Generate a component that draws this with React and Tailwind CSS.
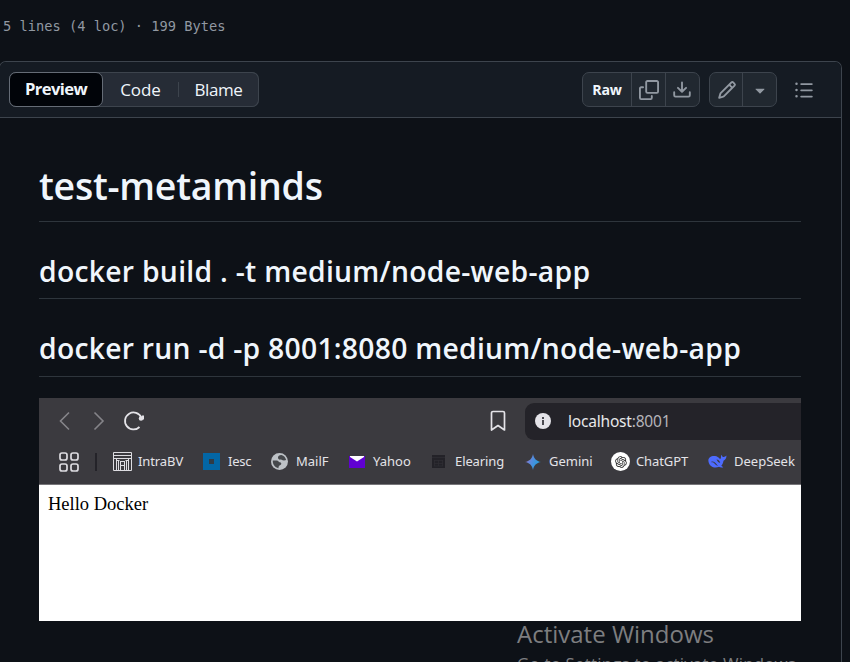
import { RiOpenaiFill } from "react-icons/ri";

const ui = "font-['Open_Sans','Noto_Sans',sans-serif]";
const browserUi = "font-['Noto_Sans','Open_Sans',sans-serif]";

function Octicon({ paths }) {
  return (
    <svg viewBox="0 0 16 16" className="size-5 shrink-0 fill-[#9198a1]">
      {paths.map((d) => (
        <path key={d} d={d} />
      ))}
    </svg>
  );
}

const copy = [
  "M0 6.75C0 5.784.784 5 1.75 5h1.5a.75.75 0 0 1 0 1.5h-1.5a.25.25 0 0 0-.25.25v7.5c0 .138.112.25.25.25h7.5a.25.25 0 0 0 .25-.25v-1.5a.75.75 0 0 1 1.5 0v1.5A1.75 1.75 0 0 1 9.25 16h-7.5A1.75 1.75 0 0 1 0 14.25Z",
  "M5 1.75C5 .784 5.784 0 6.75 0h7.5C15.216 0 16 .784 16 1.75v7.5A1.75 1.75 0 0 1 14.25 11h-7.5A1.75 1.75 0 0 1 5 9.25Zm1.75-.25a.25.25 0 0 0-.25.25v7.5c0 .138.112.25.25.25h7.5a.25.25 0 0 0 .25-.25v-7.5a.25.25 0 0 0-.25-.25Z",
];
const download = [
  "M2.75 14A1.75 1.75 0 0 1 1 12.25v-2.5a.75.75 0 0 1 1.5 0v2.5c0 .138.112.25.25.25h10.5a.25.25 0 0 0 .25-.25v-2.5a.75.75 0 0 1 1.5 0v2.5A1.75 1.75 0 0 1 13.25 14Z",
  "M7.25 7.689V2a.75.75 0 0 1 1.5 0v5.689l1.97-1.969a.749.749 0 1 1 1.06 1.06l-3.25 3.25a.749.749 0 0 1-1.06 0L4.22 6.78a.749.749 0 1 1 1.06-1.06l1.97 1.969Z",
];
const pencil = [
  "M11.013 1.427a1.75 1.75 0 0 1 2.474 0l1.086 1.086a1.75 1.75 0 0 1 0 2.474l-8.61 8.61c-.21.21-.47.364-.756.445l-3.251.93a.75.75 0 0 1-.927-.928l.929-3.25c.081-.286.235-.547.445-.758l8.61-8.61Zm.176 4.823L9.75 4.81l-6.286 6.287a.253.253 0 0 0-.064.108l-.558 1.953 1.953-.558a.253.253 0 0 0 .108-.064Zm1.238-3.763a.25.25 0 0 0-.354 0L10.811 3.75l1.439 1.44 1.263-1.263a.25.25 0 0 0 0-.354Z",
];
const triangle = [
  "m4.427 7.427 3.396 3.396a.25.25 0 0 0 .354 0l3.396-3.396A.25.25 0 0 0 11.396 7H4.604a.25.25 0 0 0-.177.427Z",
];
const list = [
  "M5.75 2.5h8.5a.75.75 0 0 1 0 1.5h-8.5a.75.75 0 0 1 0-1.5Zm0 5h8.5a.75.75 0 0 1 0 1.5h-8.5a.75.75 0 0 1 0-1.5Zm0 5h8.5a.75.75 0 0 1 0 1.5h-8.5a.75.75 0 0 1 0-1.5ZM2 14a1 1 0 1 1 0-2 1 1 0 0 1 0 2Zm1-6a1 1 0 1 1-2 0 1 1 0 0 1 2 0ZM2 4a1 1 0 1 1 0-2 1 1 0 0 1 0 2Z",
];

function Toolbar() {
  return (
    <div className="flex h-[55px] items-start bg-[#151b23] pt-2.5 text-[#f0f6fc]">
      <div className="ml-[9px] flex h-[35px] w-[250px] rounded-[7px] bg-[#262c36] text-[17.5px] whitespace-nowrap shadow-[inset_0_0_0_1px_#3d444d]">
        <div className="flex w-[94px] items-center justify-center rounded-[7px] border border-[#656c76] bg-[#010409]">
          <span className="text-[16.6px] font-bold tracking-[-0.6px]">Preview</span>
        </div>
        <div className="flex w-[75px] items-center justify-center">
          <span className="text-[17px] tracking-[-0.1px]">Code</span>
        </div>
        <div className="my-[10px] w-px bg-[#3d444d]" />
        <div className="flex w-[79px] items-center justify-center">
          <span className="text-[17px] tracking-[-0.4px]">Blame</span>
        </div>
      </div>
      <div className="ml-[323px] flex h-[35px] w-[118px] divide-x divide-[#3d444d] rounded-[7px] border border-[#3d444d] bg-[#212830]">
        <div className="flex w-[49px] items-center justify-center text-[14.2px] font-bold tracking-[-0.2px]">Raw</div>
        <div className="flex w-[34px] items-center justify-center"><Octicon paths={copy} /></div>
        <div className="flex flex-1 items-center justify-center pr-px"><Octicon paths={download} /></div>
      </div>
      <div className="ml-[9px] flex h-[35px] w-[68px] divide-x divide-[#3d444d] rounded-[7px] border border-[#3d444d] bg-[#212830]">
        <div className="flex w-[33px] items-center justify-center pl-px"><Octicon paths={pencil} /></div>
        <div className="flex flex-1 items-center justify-center"><Octicon paths={triangle} /></div>
      </div>
      <div className="ml-[17px] flex h-[35px] items-center"><Octicon paths={list} /></div>
    </div>
  );
}

function Bookmark({ className, label, labelClass, children }) {
  return (
    <div className={`flex shrink-0 items-center ${className}`}>
      {children}
      <span className={`whitespace-nowrap ${labelClass}`}>{label}</span>
    </div>
  );
}

function BrowserShot() {
  return (
    <div className={`h-[223px] w-[762px] overflow-hidden bg-white ${browserUi}`}>
      <div className="h-[87px] border-b border-[#77767a] bg-[#3b3a3f] text-[#e4e3e8]">
        <div className="flex h-[46px] items-center">
          <svg viewBox="0 0 90 24" className="ml-[18px] h-6 w-[90px] shrink-0 fill-none stroke-[#858489] stroke-[1.6]">
            <path d="M12 3.500 3.500 12l8.500 8.500M37.500 3.500l8.500 8.500-8.500 8.500" />
            <path d="M84.300 8.500A8.500 8.500 0 1 0 82.500 18" className="stroke-[#e4e3e8] stroke-[1.800]" />
            <path d="M82.500 9.500h3.500v-3" className="stroke-[#e4e3e8] stroke-2" />
            <circle cx="84" cy="9.500" r="2.200" className="fill-[#e4e3e8] stroke-none" />
          </svg>
          <svg viewBox="0 0 16 22" className="ml-[343px] h-[22px] w-4 shrink-0 fill-none stroke-[#e4e3e8] stroke-[1.7]">
            <path d="M3 1.500h10a1.500 1.500 0 0 1 1.500 1.500v17L8 15.500 1.500 20V3A1.500 1.500 0 0 1 3 1.500Z" strokeLinejoin="round" />
          </svg>
          <div className="ml-[19px] flex h-[37px] w-[277px] items-center rounded-l-[9px] bg-[#242329]">
            <svg viewBox="0 0 16 16" className="ml-2.5 size-4">
              <circle cx="8" cy="8" r="8" className="fill-[#e4e3e8]" />
              <path d="M7 7h2v5H7zM7 4h2v2H7z" className="fill-[#4a494f]" />
            </svg>
            <span className="mt-px ml-[17px] text-[15.500px] tracking-[-0.2px] text-[#e8e8ea]">
              localhost<span className="text-[#b5b4b9]">:8001</span>
            </span>
          </div>
        </div>
        <div className="flex h-[35px] items-center text-[13px]">
          <svg viewBox="0 0 20 20" className="ml-5 size-5 shrink-0 fill-none stroke-[#dddce1] stroke-[1.7]">
            <rect x="1" y="1" width="7" height="7" rx="2" />
            <rect x="12" y="1" width="7" height="7" rx="2" />
            <rect x="1" y="12" width="7" height="7" rx="2" />
            <rect x="12" y="12" width="7" height="7" rx="2" />
          </svg>
          <div className="ml-4 h-[18px] w-[2px] shrink-0 bg-[#242329]" />
          <Bookmark className="ml-4 w-[90px]" label="IntraBV" labelClass="ml-[6px] tracking-[-0.1px]">
            <svg viewBox="0 0 19 19" className="size-[19px] shrink-0 fill-none stroke-[#dddce1] stroke-1">
              <path d="M.5.500h18v18H.5zM.5 3.500h18M.5 6.500h18M3.500 6.500v12M5.500 9v9.500M7.500 9v9.500M11.500 9v9.500M13.500 9v9.500M15.500 6.500v12M7.500 9.500h4M7.500 13.500h4M3.500 8.500h3M12.500 8.500h3" />
            </svg>
          </Bookmark>
          <Bookmark className="w-[68px]" label="Iesc" labelClass="ml-2 tracking-[-0.2px]">
            <div className="flex size-[17px] shrink-0 items-center justify-center bg-[#0366a5]">
              <div className="size-[5px] bg-[#303b46]" />
            </div>
          </Bookmark>
          <Bookmark className="w-[78px]" label="MailF" labelClass="ml-2">
            <svg viewBox="0 0 17 17" className="size-[17px] shrink-0">
              <circle cx="8.500" cy="8.500" r="8.500" className="fill-[#bdc1c6]" />
              <path d="M1.800 7.500h4c1.500 0 1.700 1.500 3 1.800 1.500.2 2 1.500 1 2.500-1.200 1-2.300.8-2.300 3.400C4 14.600 1.500 11.500 1.800 7.500ZM7 4.500c0-1.500 1.500-2.500 3.500-2.400 2.500.7 4 2.400 4.600 4.900-1.600.8-3.600.5-4.600-.3-.8-.7-1.300.3-2.300-.2C7.500 6 7 5.500 7 4.500Z" className="fill-[#46484c]" />
            </svg>
          </Bookmark>
          <Bookmark className="w-[83px]" label="Yahoo" labelClass="ml-2">
            <svg viewBox="0 0 16 12" className="h-3 w-4 shrink-0">
              <path d="M0 0h16v12H0z" className="fill-[#6001d2]" />
              <path d="M1 0h14v1L8 5.500 1 1z" className="fill-white" />
            </svg>
          </Bookmark>
          <Bookmark className="w-[93px]" label="Elearing" labelClass="ml-2.5 tracking-[-0.1px]">
            <svg viewBox="0 0 13 13" className="size-[13px] shrink-0">
              <path d="M0 0h13v13H0z" className="fill-[#232228]" />
              <path d="M0 2.500h13M2 5.500h9M2 8.500h9M2 11h9M6.500 5v6M2.500 5v6M10.500 5v6" className="fill-none stroke-[#2f2e34] stroke-[0.7]" />
            </svg>
          </Bookmark>
          <Bookmark className="w-[86px]" label="Gemini" labelClass="ml-2">
            <svg viewBox="0 0 16 16" className="size-4 shrink-0">
              <defs>
                <linearGradient id="gem" x1="0" x2="1" y1="0.200" y2="0.600">
                  <stop stopColor="#9b72cb" />
                  <stop offset="0.500" stopColor="#4c8fe0" />
                  <stop offset="1" stopColor="#1ba1d8" />
                </linearGradient>
              </defs>
              <path d="M8 0c.7 4.500 3.500 7.300 8 8-4.500.7-7.300 3.500-8 8-.7-4.500-3.500-7.300-8-8 4.500-.7 7.300-3.500 8-8Z" fill="url(#gem)" />
            </svg>
          </Bookmark>
          <Bookmark className="w-[97px]" label="ChatGPT" labelClass="ml-[6px] tracking-[-0.1px]">
            <div className="flex size-[19px] shrink-0 items-center justify-center rounded-full bg-white">
              <RiOpenaiFill className="size-[14px] text-[#222]" />
            </div>
          </Bookmark>
          <Bookmark className="" label="DeepSeek" labelClass="ml-[7px]">
            <svg viewBox="0 0 19 15" className="h-[15px] w-[19px] shrink-0 fill-[#4d6bfe]">
              <path d="M7 2c2 .2 3.500 1.200 5 3 1.300-.2 1-2.500 1-4 .8.300 1.200 1.400 2 2 1.100.1 2.300-.5 3.500-1.500C18.500 4.500 17 6 15.500 6.700c-.3 2.200-1 3.700-2.200 5l2 1.500c-1.600.8-3.300.3-4.300-.4-4.500 2.200-9.500-.3-10.500-5C-.3 4 2.500 1.600 7 2Z" />
              <path d="M3.500 7.500C6 7 8 9 10 12c-2.500-.8-3-2-4-3-.9-.9-1.500-.4-2.500-.8ZM8.500 5.500c2 0 3.200 1.500 3.700 3.500-1.500-.3-2.700-1.500-3.700-3.500Z" className="fill-[#3b3a3f]" />
            </svg>
          </Bookmark>
        </div>
      </div>
      <div className="pt-[7px] pl-[9px] font-['Liberation_Serif',serif] text-[18.500px] leading-6 text-black">
        <span>Hello Docker</span>
      </div>
    </div>
  );
}

export default function App() {
  return (
    <div className={`relative h-[662px] w-[850px] overflow-hidden bg-[#0d1117] ${ui}`}>
      <div className="flex h-[61px] items-start pt-[15px] pl-[3px] font-['DejaVu_Sans_Mono',monospace] text-[13.700px] leading-[22px] whitespace-pre text-[#9198a1]">
        5 lines (4 loc) · 199 Bytes
      </div>
      <div className="-ml-px w-[843px] rounded-t-[7px] border border-b-0 border-[#3d444d]">
        <div className="overflow-hidden rounded-t-[6px]">
          <Toolbar />
        </div>
        <div className="h-[547px] border-t border-[#3d444d] pl-[39px] text-[#f0f6fc]">
          <h1 className="mt-[40px] flex h-[64px] w-[762px] items-center border-b border-[#3d444d]/70 pb-[6px] text-[37.500px] font-semibold whitespace-nowrap">
            <span className="tracking-[-0.25px]">test-metaminds</span>
          </h1>
          <h2 className="mt-[30px] flex h-[47px] w-[762px] items-center border-b border-[#3d444d]/70 pb-2 text-[28.300px] font-semibold whitespace-nowrap">
            <span className="tracking-[0.28px]">docker build . -t medium/node-web-app</span>
          </h2>
          <h2 className="mt-[30px] mb-[21px] flex h-[48px] w-[762px] items-center border-b border-[#3d444d]/70 pb-2 text-[28.300px] font-semibold whitespace-nowrap">
            <span className="tracking-[0.26px]">docker run -d -p 8001:8080 medium/node-web-app</span>
          </h2>
          <BrowserShot />
        </div>
      </div>
      <div className="absolute top-[618px] left-[517px] whitespace-nowrap text-[#7d7e80]">
        <div className="text-[24px] leading-8">Activate Windows</div>
        <div className="pt-[2px] text-[16.800px] leading-6 tracking-[0.25px]">Go to Settings to activate Windows.</div>
      </div>
    </div>
  );
}
